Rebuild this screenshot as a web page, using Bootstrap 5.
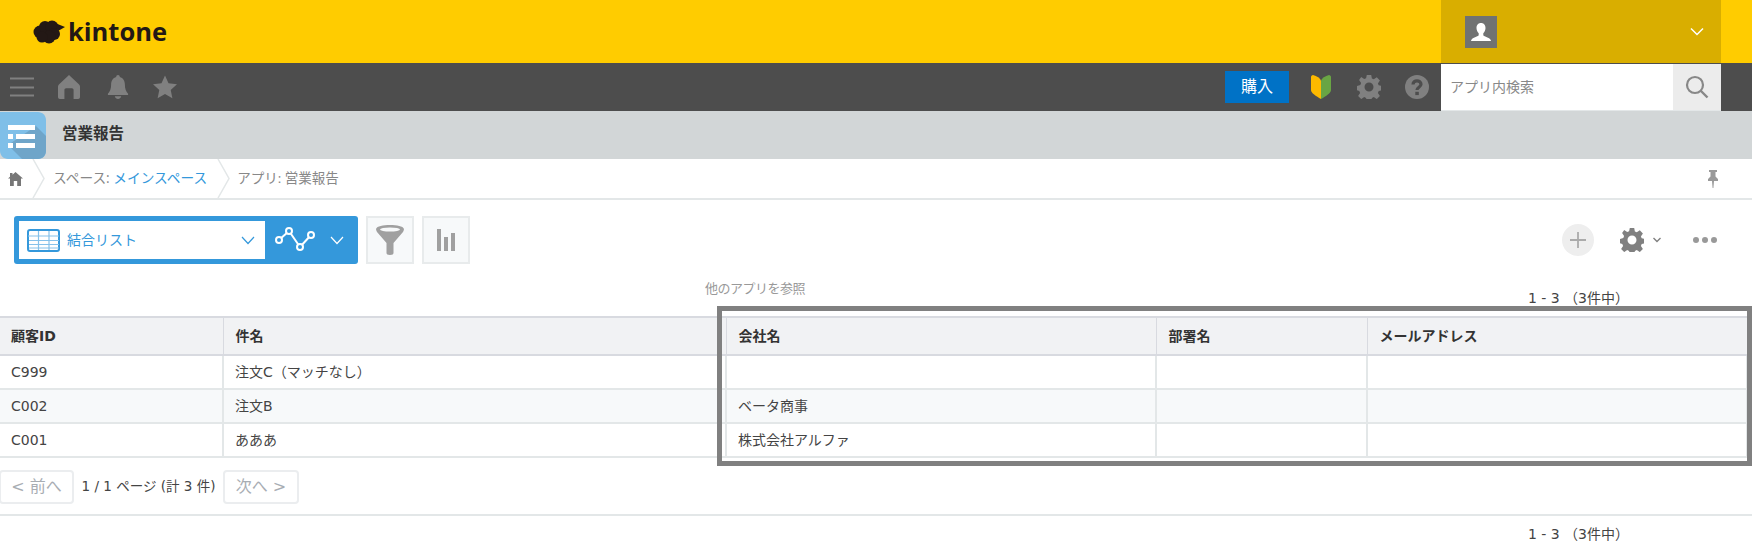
<!doctype html>
<html lang="ja"><head><meta charset="utf-8"><title>営業報告</title>
<link href="https://cdn.jsdelivr.net/npm/bootstrap@5.3.0/dist/css/bootstrap.min.css" rel="stylesheet">
<style>
html,body{height:100%;overflow:hidden}
body{font-family:"DejaVu Sans","Noto Sans CJK JP",sans-serif;font-size:14px;color:#333;background:#fff;position:relative}
svg{display:block;flex:none}
.top{height:63px;background:#fc0}
.logo-text{font-family:"Open Sans","Noto Sans",sans-serif;font-weight:700;font-size:25.5px;line-height:1;color:#231815;margin-left:3px}
.logo{margin-left:33px}
.user{width:280px;height:63px;background:#d9ae00;margin-right:31px;padding-left:24px;padding-right:17px}
.avatar{width:32px;height:32px;background:#707272}
.dark{height:48px;background:#4d4d4d}
.burger{margin-left:10px}
.ico-home{margin-left:24px}
.ico-bell{margin-left:27px}
.ico-star{margin-left:24px}
.buy{width:64px;height:32px;background:#0072c6;color:#fff;font-size:16px;line-height:32px;text-align:center;margin-right:22px;border-radius:0;padding:0;border:0}
.ico-mark{margin-right:26px}
.search{width:280px;height:47px;margin-right:31px;margin-left:12px;margin-top:1px;background:#fff;border-bottom:1px solid #e3e7e8}
.search .ph{padding-left:9px;color:#888;font-size:14px;flex:1}
.search .go{width:48px;height:46px;background:#ececec}
.appbar{height:48px;background:#d2d6d7}
.appicon{width:46px;height:47px}
.apptitle{font-size:15.5px;font-weight:700;margin-left:16px;color:#333}
.crumb{height:41px;border-bottom:2px solid #e3e7e8;color:#888;font-size:13.5px;font-family:"Open Sans","Noto Sans CJK JP",sans-serif}
.crumb a{color:#3498db;text-decoration:none}
.sep{margin-left:9px}
.sep2{margin-left:10px}
.crumb-a{margin-left:7px;font-size:13.7px}
.crumb-b{margin-left:6px;font-size:13.5px}
.pin{margin-right:33px}
.views{margin:16px 0 0 14px;height:48px}
.switch{width:344px;height:48px;background:#3498db;border-radius:3px;padding:5px}
.pick{width:246px;height:38px;background:#fff;padding:0 10px 0 8px;color:#3498db;font-size:14px}
.pick-label{margin-left:7px}
.graph{margin-left:10px}
.chev2{margin-left:15px}
.tool{width:48px;height:48px;background:#f7f9fa;border:2px solid #e8ebec;margin-left:8px}
.actions{margin-right:35px;margin-top:24px}
.plus{width:32px;height:32px;border-radius:50%;background:#eee}
.gear2{margin-left:26px}
.chev3{margin-left:9px}
.dots{margin-left:32px}
.meta{height:52px}
.cap{margin-left:705px;margin-top:15px;color:#999;font-size:13px;letter-spacing:-.5px;line-height:20px}
.range{margin-left:auto;margin-right:123px;margin-top:24px;font-size:14px;line-height:20px;color:#444}
.list{table-layout:fixed;width:1748px;margin:0;--bs-table-bg:transparent;border-collapse:collapse}
.list th{height:38px;padding:0 12px;background:#f1f2f4;font-size:14px;font-weight:700;color:#333;border-top:2px solid #d8dae0;border-bottom:2px solid #d8dae0;border-right:1px solid #d8dae0;vertical-align:middle;box-shadow:none;line-height:1}
.list td{height:34px;padding:0 11px;font-size:14px;color:#444;border-bottom:2px solid #e3e7e8;border-right:2px solid #e3e7e8;vertical-align:middle;line-height:1;box-shadow:none}
.list tbody tr:nth-child(2) td{background:#f7f9fa}
.list th:first-child,.list td:first-child{padding-left:11px}
.pager{height:58px;border-bottom:2px solid #e3e7e8;padding-top:12px;align-items:flex-start}
.pg{height:34px;border:2px solid #ebedef;border-radius:4px;background:#fff;color:#a8adb3;font-size:16px;line-height:30px;padding:0;text-align:center;white-space:nowrap}
.pg.prev{width:75px;margin-left:-1px}
.pg.next{width:76px}
.pginfo{width:149px;text-align:center;font-size:13.5px;line-height:32px;color:#444;white-space:nowrap}
.range.b{margin-top:8px}
.hl{position:absolute;left:717px;top:306px;width:1035px;height:160px;border:5px solid #808080;pointer-events:none}
</style></head><body>
<header class="top d-flex align-items-center justify-content-between">
  <div class="logo d-flex align-items-center">
    <svg width="32" height="24" viewBox="0 0 32 24"><g fill="#231815"><circle cx="7" cy="12" r="6.500"/><circle cx="12" cy="7" r="6"/><circle cx="19" cy="7" r="6.500"/><circle cx="21" cy="14" r="6"/><circle cx="16" cy="17" r="6.500"/><circle cx="9" cy="17" r="5.500"/><path d="M22 3l10 4-7 4z"/></g></svg>
    <span class="logo-text">kintone</span>
  </div>
  <div class="user d-flex align-items-center justify-content-between">
    <div class="avatar d-flex align-items-center justify-content-center">
      <svg width="24" height="24" viewBox="0 0 24 24"><path fill="#fff" d="M12 3c3 0 4.500 2.300 4.500 5 0 2.200-1 4-2.200 5.200v2c0 1 4.500 1.800 6.700 3.800.6.600.9 1.200 1 2H2c.1-.8.400-1.400 1-2 2.200-2 6.700-2.800 6.700-3.800v-2C8.500 12 7.500 10.200 7.500 8c0-2.700 1.500-5 4.500-5z"/></svg>
    </div>
    <svg width="14" height="9" viewBox="0 0 14 9"><path d="M1 1.500l6 6 6-6" fill="none" stroke="#fff" stroke-width="1.500"/></svg>
  </div>
</header>
<nav class="dark d-flex align-items-center">
  <svg class="burger" width="24" height="24" viewBox="0 0 24 24"><path d="M0 3.500h24M0 12.500h24M0 20.500h24" stroke="#808080" stroke-width="2.200"/></svg>
  <svg width="22" height="24" viewBox="0 0 24 24" preserveAspectRatio="none" class="ico-home"><path fill="#808080" d="M12 0l11 9.500c.6.500 1 1.300 1 2.100V22c0 1.100-.9 2-2 2h-5V15c0-1-.8-1.800-1.800-1.800H8.800C7.800 13.200 7 14 7 15v9H2c-1.100 0-2-.9-2-2V11.600c0-.8.400-1.600 1-2.100z"/></svg>
  <svg width="22" height="24" viewBox="0 0 24 24" preserveAspectRatio="none" class="ico-bell"><path fill="#808080" d="M12 0c1.200 0 2 .8 2 1.900 3.500.8 5.500 3.700 5.500 7.600 0 4.500 1.300 7.200 3.500 9.300v1.200H1v-1.200c2.200-2.100 3.500-4.800 3.500-9.300 0-3.900 2-6.800 5.500-7.600C10 .8 10.800 0 12 0zM8.500 21.200h7c-.5 1.700-1.900 2.800-3.500 2.800s-3-1.100-3.500-2.800z"/></svg>
  <svg width="24" height="24" viewBox="0 0 24 24" class="ico-star"><path fill="#808080" d="M12 .5l3.500 7.700 8.500 1-6.300 5.700 1.700 8.400L12 19.100l-7.400 4.200 1.700-8.400L0 9.200l8.500-1z"/></svg>
  <div class="ms-auto d-flex align-items-center">
    <button type="button" class="btn buy">購入</button>
    <svg width="20" height="24" viewBox="0 0 20 24" class="ico-mark"><path fill="#fdb900" d="M0 2c0-1 .9-2 2-2 4 1 7 3 8 5.500V24C5 21 0 18 0 15z"/><path fill="#69a544" d="M20 2c0-1-.9-2-2-2-4 1-7 3-8 5.500V24c5-3 10-6 10-9z"/></svg>
    <svg width="24" height="24" viewBox="0 0 24 24" class="me-4"><path fill="#808080" fill-rule="evenodd" d="M9.800 0h4.400l.7 3.500 1.900.8 3-2 3.100 3.100-2 3 .8 1.900 3.300.7v4.400l-3.300.7-.8 1.900 2 3-3.100 3.100-3-2-1.900.8-.7 3.300H9.800l-.7-3.300-1.900-.8-3 2L1.100 21l2-3-.8-1.900L0 15.300v-4.400l3.300-.9.800-1.900-2-3L4.200 2l3 2 1.900-.8zM12 7.500a4.500 4.500 0 1 0 0 9 4.500 4.500 0 0 0 0-9z"/></svg>
    <svg width="24" height="24" viewBox="0 0 24 24"><circle cx="12" cy="12" r="12" fill="#808080"/><path fill="none" stroke="#4d4d4d" stroke-width="3.200" d="M8 9.500c0-2.300 1.800-3.700 4-3.700s4 1.300 4 3.400c0 3-4 3-4 5.800"/><rect x="10.300" y="16.800" width="3.500" height="3.300" fill="#4d4d4d"/></svg>
    <div class="search d-flex align-items-center">
      <div class="ph">アプリ内検索</div>
      <div class="go d-flex align-items-center justify-content-center">
        <svg width="24" height="24" viewBox="0 0 24 24"><circle cx="10" cy="10" r="8" fill="none" stroke="#888" stroke-width="2.200"/><path d="M15.500 15.500l7 7" stroke="#888" stroke-width="2.400"/></svg>
      </div>
    </div>
  </div>
</nav>
<div class="appbar d-flex align-items-center">
  <svg class="appicon" viewBox="0 0 46 47"><path fill="#7fbfe8" d="M0 0h38c4.400 0 8 3.600 8 8v31c0 4.400-3.600 8-8 8H8c-4.400 0-8-3.600-8-8z"/><path fill="#6fa5c9" d="M36 14l10 10v15c0 4.400-3.600 8-8 8H22L8 33z"/><path fill="#fff" d="M8 13h27v5H8zM8 22h5v5H8zM16 22h19v5H16zM8 31h5v5H8zM16 31h19v5H16z"/></svg>
  <div class="apptitle">営業報告</div>
</div>
<div class="crumb d-flex align-items-center">
  <svg width="15" height="14" viewBox="0 0 15 14" class="ms-2"><path fill="#777" d="M7.500 0L15 6.500h-2V14H9.200V9H5.800v5H2V6.500H0L2 4.800V1h2.500v1.700z"/></svg>
  <svg width="14" height="39" viewBox="0 0 14 39" class="sep"><path d="M1 0l11 19.500L1 39" fill="none" stroke="#e3e7e8" stroke-width="1.500"/></svg>
  <span class="crumb-a">スペース: <a href="#">メインスペース</a></span>
  <svg width="14" height="39" viewBox="0 0 14 39" class="sep2"><path d="M1 0l11 19.500L1 39" fill="none" stroke="#e3e7e8" stroke-width="1.500"/></svg>
  <span class="crumb-b">アプリ: 営業報告</span>
  <svg width="12" height="18" viewBox="0 0 12 18" class="ms-auto pin"><path fill="#999" d="M2 0h8v2H8.500v4.500L11 9v2H7l-.6 7h-.8L5 11H1V9l2.500-2.500V2H2z"/></svg>
</div>
<div class="d-flex align-items-start">
  <div class="views d-flex">
    <div class="switch d-flex align-items-center">
      <div class="pick d-flex align-items-center">
        <svg width="33" height="23" viewBox="0 0 33 23"><rect x="1" y="1" width="31" height="21" rx="2" fill="#fff" stroke="#3498db" stroke-width="2"/><path d="M1 7h31M2 11.500h30M2 15.500h30M2 19h30M11.500 2v19M22 2v19" stroke="#85c1ea" stroke-width="1.200"/></svg>
        <span class="pick-label">結合リスト</span>
        <svg width="14" height="9" viewBox="0 0 14 9" class="ms-auto"><path d="M1 1l6 6.500L13 1" fill="none" stroke="#3498db" stroke-width="1.200"/></svg>
      </div>
      <svg width="40" height="26" viewBox="0 0 40 26" class="graph"><path d="M4 13L14 4M14 4L25 20M25 20L36 8" stroke="#fff" stroke-width="2" fill="none"/><g fill="#3498db" stroke="#fff" stroke-width="2"><circle cx="4" cy="13" r="3"/><circle cx="14" cy="4" r="3"/><circle cx="25" cy="20" r="3"/><circle cx="36" cy="8" r="3"/></g></svg>
      <svg width="14" height="9" viewBox="0 0 14 9" class="chev2"><path d="M1 1l6 6.500L13 1" fill="none" stroke="#fff" stroke-width="1.200"/></svg>
    </div>
    <div class="tool d-flex align-items-center justify-content-center">
      <svg width="30" height="30" viewBox="0 0 30 30"><path fill="#a0a0a0" d="M1 4C2 1 8 0 15 0s13 1 14 4c0 1-.5 2-1 3l-9.500 11v10c0 1-1 2-3.500 2s-3.500-1-3.500-2V18L2 7C1.500 6 1 5 1 4z"/><ellipse cx="15" cy="4.500" rx="10" ry="2" fill="#f7f9fa"/></svg>
    </div>
    <div class="tool d-flex align-items-center justify-content-center">
      <svg width="20" height="24" viewBox="0 0 20 24"><path fill="#a0a0a0" d="M1 1h4v22H1zM8 9h4v14H8zM15 5h4v18h-4z"/></svg>
    </div>
  </div>
  <div class="actions ms-auto d-flex align-items-center">
    <div class="plus d-flex align-items-center justify-content-center"><svg width="16" height="16" viewBox="0 0 16 16"><path d="M8 0v16M0 8h16" stroke="#aaa" stroke-width="1.800"/></svg></div>
    <svg width="24" height="24" viewBox="0 0 24 24" class="gear2"><path fill="#808080" fill-rule="evenodd" d="M9.800 0h4.400l.7 3.500 1.900.8 3-2 3.100 3.100-2 3 .8 1.900 3.300.7v4.400l-3.300.7-.8 1.900 2 3-3.100 3.100-3-2-1.900.8-.7 3.300H9.800l-.7-3.300-1.900-.8-3 2L1.100 21l2-3-.8-1.900L0 15.300v-4.400l3.300-.9.800-1.900-2-3L4.200 2l3 2 1.900-.8zM12 7.500a4.500 4.500 0 1 0 0 9 4.500 4.500 0 0 0 0-9z"/></svg>
    <svg width="8" height="6" viewBox="0 0 8 6" class="chev3"><path d="M.5 1L4 4.500 7.500 1" fill="none" stroke="#808080" stroke-width="1.400"/></svg>
    <svg width="24" height="6" viewBox="0 0 24 6" class="dots"><g fill="#999"><circle cx="3" cy="3" r="3"/><circle cx="12" cy="3" r="3"/><circle cx="21" cy="3" r="3"/></g></svg>
  </div>
</div>
<div class="meta d-flex align-items-start">
  <div class="cap">他のアプリを参照</div>
  <div class="range">1 - 3 （3件中）</div>
</div>
<table class="table list">
  <colgroup><col style="width:223px"><col style="width:503px"><col style="width:430px"><col style="width:211px"><col></colgroup>
  <thead><tr><th>顧客ID</th><th>件名</th><th>会社名</th><th>部署名</th><th>メールアドレス</th></tr></thead>
  <tbody>
    <tr><td>C999</td><td>注文C（マッチなし）</td><td></td><td></td><td></td></tr>
    <tr><td>C002</td><td>注文B</td><td>ベータ商事</td><td></td><td></td></tr>
    <tr><td>C001</td><td>あああ</td><td>株式会社アルファ</td><td></td><td></td></tr>
  </tbody>
</table>
<div class="pager d-flex">
  <button type="button" class="btn pg prev">&lt; 前へ</button>
  <div class="pginfo">1 / 1 ページ (計 3 件)</div>
  <button type="button" class="btn pg next">次へ &gt;</button>
</div>
<div class="d-flex"><div class="range b">1 - 3 （3件中）</div></div>
<div class="hl"></div>
<script src="https://cdn.jsdelivr.net/npm/bootstrap@5.3.0/dist/js/bootstrap.bundle.min.js"></script>
</body></html>
